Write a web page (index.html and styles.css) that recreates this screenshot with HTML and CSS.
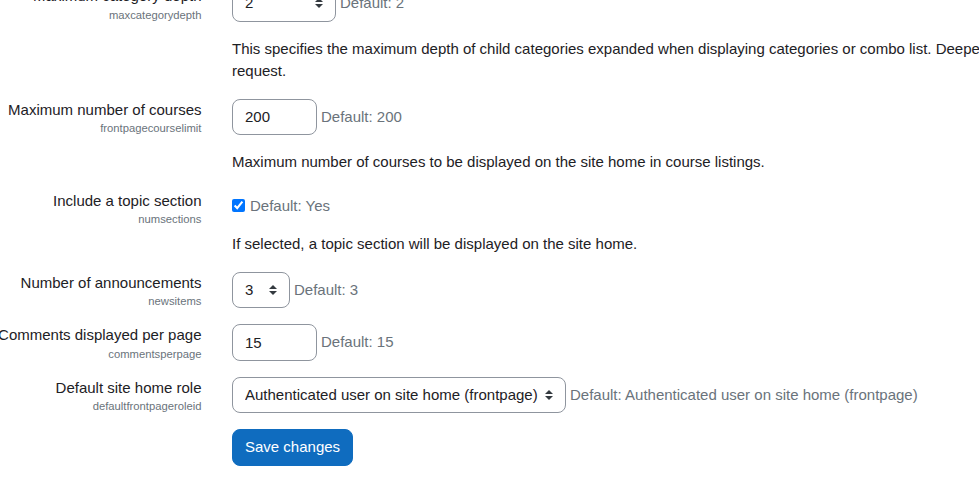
FILE: index.html
```html
<!DOCTYPE html>
<html lang="en">
<head>
<meta charset="utf-8">
<title>Site home settings</title>
<link rel="stylesheet" href="styles.css">
</head>
<body>
<div class="page">
  <form class="settings">
    <div class="form-item">
      <div class="form-label">
        <label>Maximum category depth</label>
        <span class="form-shortname">maxcategorydepth</span>
      </div>
      <div class="form-setting">
        <div class="field-line">
          <select class="custom-select select-depth"><option>2</option></select>
          <span class="form-defaultinfo">Default: 2</span>
        </div>
        <div class="form-description">This specifies the maximum depth of child categories expanded when displaying categories or combo list. Deeper level categories will appear as links and user can expand them with AJAX request.</div>
      </div>
    </div>

    <div class="form-item">
      <div class="form-label">
        <label>Maximum number of courses</label>
        <span class="form-shortname">frontpagecourselimit</span>
      </div>
      <div class="form-setting">
        <div class="field-line">
          <input class="form-control input-num" type="text" value="200">
          <span class="form-defaultinfo">Default: 200</span>
        </div>
        <div class="form-description">Maximum number of courses to be displayed on the site home in course listings.</div>
      </div>
    </div>

    <div class="form-item">
      <div class="form-label">
        <label>Include a topic section</label>
        <span class="form-shortname">numsections</span>
      </div>
      <div class="form-setting">
        <div class="field-line checkbox-line">
          <input class="form-check" type="checkbox" checked>
          <span class="form-defaultinfo check-default">Default: Yes</span>
        </div>
        <div class="form-description">If selected, a topic section will be displayed on the site home.</div>
      </div>
    </div>

    <div class="form-item">
      <div class="form-label">
        <label>Number of announcements</label>
        <span class="form-shortname">newsitems</span>
      </div>
      <div class="form-setting">
        <div class="field-line">
          <select class="custom-select select-news"><option>3</option></select>
          <span class="form-defaultinfo">Default: 3</span>
        </div>
      </div>
    </div>

    <div class="form-item">
      <div class="form-label">
        <label>Comments displayed per page</label>
        <span class="form-shortname">commentsperpage</span>
      </div>
      <div class="form-setting">
        <div class="field-line">
          <input class="form-control input-num" type="text" value="15">
          <span class="form-defaultinfo">Default: 15</span>
        </div>
      </div>
    </div>

    <div class="form-item">
      <div class="form-label">
        <label>Default site home role</label>
        <span class="form-shortname">defaultfrontpageroleid</span>
      </div>
      <div class="form-setting">
        <div class="field-line">
          <select class="custom-select select-role"><option>Authenticated user on site home (frontpage)</option></select>
          <span class="form-defaultinfo">Default: Authenticated user on site home (frontpage)</span>
        </div>
      </div>
    </div>

    <div class="form-buttons">
      <button type="button" class="btn-primary">Save changes</button>
    </div>
  </form>
</div>
</body>
</html>
```

FILE: styles.css
```css
html, body {
  margin: 0;
  padding: 0;
  overflow: hidden;
  background: #ffffff;
}

body {
  font-family: "Liberation Sans", Arial, sans-serif;
  font-size: 15px;
  line-height: 1.5;
  color: #1d2125;
}

.page {
  width: 100vw;
  overflow: hidden;
}

.settings {
  margin-top: -15px;
  width: 1510px;
}

.form-item {
  display: grid;
  grid-template-columns: 201.5px 1278px;
  column-gap: 30.5px;
  margin-bottom: 16px;
}

.form-label {
  display: flex;
  flex-direction: column;
  align-items: flex-end;
  white-space: nowrap;
}

.form-label label {
  display: block;
}

.form-shortname {
  display: block;
  font-size: 11.25px;
  line-height: 13px;
  padding-top: 1px;
  color: #6a737b;
}

.form-setting {
  min-width: 0;
}

.field-line {
  display: flex;
  align-items: center;
}

.form-defaultinfo {
  color: #6a737b;
  margin-left: 4px;
  white-space: nowrap;
}

.form-control,
.custom-select {
  box-sizing: border-box;
  height: 36.5px;
  font-family: inherit;
  font-size: 15px;
  line-height: 1.5;
  color: #1d2125;
  background-color: #ffffff;
  border: 1px solid #8f959e;
  border-radius: 8px;
  margin: 0;
}

.form-control {
  padding: 6px 12px;
}

.input-num {
  width: 85px;
}

.custom-select {
  -webkit-appearance: none;
  appearance: none;
  padding: 6px 28px 6px 12px;
  background-image: url("data:image/svg+xml,%3Csvg xmlns='http://www.w3.org/2000/svg' width='4' height='5' viewBox='0 0 4 5'%3E%3Cpath fill='%23343a40' d='M2 0L0 2h4zm0 5L0 3h4z'/%3E%3C/svg%3E");
  background-repeat: no-repeat;
  background-position: right 12px center;
  background-size: 8px 10px;
}

.select-depth {
  width: 104px;
}

.select-news {
  width: 58px;
}

.select-role {
  width: 334px;
  padding-right: 26px;
}

.checkbox-line {
  padding-top: 5px;
}

.form-check {
  width: 13px;
  height: 13px;
  margin: 0;
}

.check-default {
  margin-left: 5px;
}

.form-description {
  margin-top: 16px;
}

.form-buttons {
  padding-left: 232px;
}

.btn-primary {
  box-sizing: border-box;
  height: 37px;
  padding: 6px 12px;
  font-family: inherit;
  font-size: 15px;
  line-height: 1.5;
  color: #ffffff;
  background-color: #0f6cbf;
  border: 1px solid #0f6cbf;
  border-radius: 8px;
}
```
